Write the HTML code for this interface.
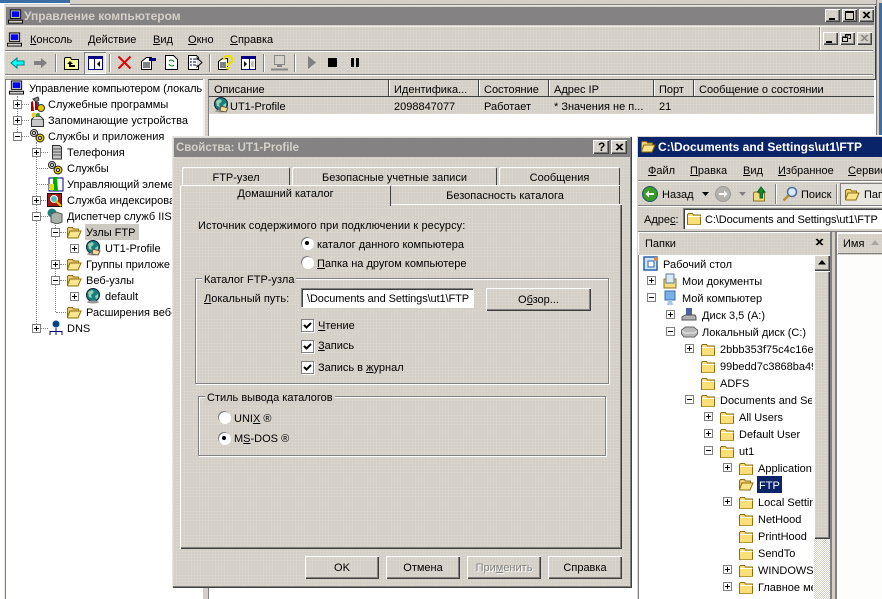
<!DOCTYPE html>
<html><head><meta charset="utf-8">
<style>
html,body{margin:0;padding:0;background:#fff;overflow:hidden}
#r{position:relative;width:882px;height:599px;overflow:hidden;background:#d4d0c8;font:11px/14px "Liberation Sans",sans-serif;color:#000}
#r div,#r span,#r svg{position:absolute}
#r u{position:static}
#r span{white-space:nowrap;line-height:14px;margin-top:1px}
.d{background:#d4d0c8 radial-gradient(circle,#dedbd4 .6px,transparent .9px) 0 0/3px 3px}
.ra{box-shadow:inset 1px 1px 0 #fff,inset -1px -1px 0 #404040,inset -2px -2px 0 #808080}
.g{border:1px solid #808080;box-shadow:1px 1px 0 #fff,inset 1px 1px 0 #fff;background:transparent}
.s{width:1px;background:#808080;border-right:1px solid #fff}
.h{height:1px;background:#808080;border-bottom:1px solid #fff}
.b{text-align:center;line-height:22px}
.rad{width:12px;height:12px;border-radius:50%;background:#fff;box-shadow:inset 1px 1px 0 #808080,1px 1px 0 #fff}
.rad i{position:absolute;left:4px;top:4px;width:4px;height:4px;border-radius:50%;background:#000}
.chk{width:11px;height:11px;background:#fff;border:1px solid #808080;box-shadow:1px 1px 0 #fff}
.v{border-left:1px dotted #808080;width:0}
.o{border-top:1px dotted #808080;height:0}
.lab{background:#d4d0c8;padding:0 2px}
.n{letter-spacing:-.1px}
</style></head><body>
<svg width="0" height="0" style="position:absolute;left:0;top:0">
<defs>
<symbol id="p" viewBox="0 0 9 9"><rect x=".5" y=".5" width="8" height="8" fill="#fff" stroke="#808080"/><path d="M2 4.5h5M4.5 2v5" stroke="#000"/></symbol>
<symbol id="m" viewBox="0 0 9 9"><rect x=".5" y=".5" width="8" height="8" fill="#fff" stroke="#808080"/><path d="M2 4.5h5" stroke="#000"/></symbol>
<symbol id="f" viewBox="0 0 16 15"><path d="M1.500 13.500V3.500l1-1h4l1 1.500h7v9.500z" fill="#fbe07a" stroke="#8a6d10"/><path d="M2 5.500h12.500" stroke="#fff"/><path d="M2 13h13v1H2z" fill="#b39b3a"/></symbol>
<symbol id="fo" viewBox="0 0 16 15"><path d="M1.500 12.500V3.500l1-1h4l1 1.500h5v2H4z" fill="#f0d070" stroke="#8a6d10"/><path d="M1.500 12.500l2.500-6.500h11l-3 7H2z" fill="#fbe48c" stroke="#8a6d10"/></symbol>
<symbol id="gl" viewBox="0 0 16 16"><circle cx="8" cy="7" r="6.500" fill="#17807e" stroke="#123"/><path d="M3 4l4-2 2 2-3 3 1 3-3-1zM10 8l3-2v4l-2 1z" fill="#9ad0b0"/><ellipse cx="8" cy="14" rx="6" ry="1.500" fill="#999"/></symbol>
<symbol id="gl2" viewBox="0 0 16 16"><use href="#gl" width="16" height="16"/><path d="M8 9l7 2-2 4-6-1z" fill="#f3dd9c" stroke="#654"/></symbol>
<symbol id="pc" viewBox="0 0 16 15"><rect x="2.500" y=".5" width="11" height="9" fill="#d4d0c8" stroke="#000"/><rect x="4" y="2" width="8" height="6" fill="#00f"/><path d="M.5 11.500h15v3H.5z" fill="#d4d0c8" stroke="#000"/></symbol>
<symbol id="tl" viewBox="0 0 16 16"><path d="M2 15V6l2-1 1 10zM6 14V3l2-2 1 13z" fill="#a00"/><path d="M8 14V6h2v8z" fill="#06a"/><path d="M4 3l5-2 1 3-3 2z" fill="#888" stroke="#333"/><circle cx="12" cy="12" r="3.500" fill="#e8c800" stroke="#333"/></symbol>
<symbol id="hd" viewBox="0 0 16 16"><rect x="2.500" y="7.500" width="12" height="7" fill="#c8c8c8" stroke="#333"/><path d="M2.500 7.500l3-3h6l3 3" fill="#e8e8e8" stroke="#333"/><circle cx="5" cy="3" r="2.500" fill="#e8c830"/><circle cx="9" cy="3" r="2" fill="#3a9a3a"/></symbol>
<symbol id="gr" viewBox="0 0 16 16"><circle cx="5" cy="5" r="3.500" fill="#ddd" stroke="#222"/><circle cx="5" cy="5" r="1.500" fill="#fff" stroke="#222"/><circle cx="11" cy="10" r="4" fill="#e8c800" stroke="#222"/><circle cx="11" cy="10" r="1.500" fill="#fff" stroke="#222"/></symbol>
<symbol id="sv" viewBox="0 0 16 16"><path d="M4.500 1.500h7l2 1.500v12h-9z" fill="#c4c4c4" stroke="#333"/><path d="M5 5h8M5 8h8M5 11h8" stroke="#555"/></symbol>
</defs></svg>
<div id="r" class="d">
<!-- background windows -->
<div style="left:0;top:0;width:70px;height:3px;background:#3a6ea5"></div>
<div style="left:70px;top:0;width:812px;height:4px;background:#d4d0c8;border-bottom:1px solid #808080"></div>
<div style="left:0;top:3px;width:70px;height:1px;background:#fff"></div>
<div style="left:876px;top:0;width:6px;height:136px;background:#d4d0c8;border-left:1px solid #808080"></div>
<div style="left:879px;top:3px;width:3px;height:133px;background:#3a6ea5"></div>
<div style="left:0;top:4px;width:4px;height:595px;background:#fff"></div>
<!-- main window -->
<div class="d" style="left:4px;top:5px;width:872px;height:594px;box-shadow:inset 1px 1px 0 #e8e6e0,inset -1px 0 0 #404040"></div>
<div style="left:6px;top:7px;width:868px;height:18px;background:#858284"></div>
<svg style="left:8px;top:9px" width="15" height="15"><use href="#pc" width="15" height="15"/></svg>
<span style="left:24px;top:8px;font-weight:bold;color:#d4d0c8;font-size:12px">Управление компьютером</span>
<div class="d ra b" style="left:825px;top:9px;width:15px;height:13px"></div><div style="left:829px;top:18px;width:6px;height:2px;background:#000"></div>
<div class="d ra" style="left:842px;top:9px;width:15px;height:13px"></div><div style="left:845px;top:11px;width:7px;height:6px;border:1px solid #000;border-top-width:2px"></div>
<div class="d ra" style="left:859px;top:9px;width:15px;height:13px"></div><svg style="left:862px;top:11px" width="9" height="9"><path d="M1 1l6 6M2 1l6 6M7 1L1 7M8 1L2 7" stroke="#000"/></svg>
<!-- menu -->
<div class="h" style="left:6px;top:26px;width:866px;background:#f0eee8;border:0"></div>
<svg style="left:7px;top:32px" width="15" height="15"><use href="#pc" width="15" height="15"/></svg>
<span style="left:30px;top:32px"><u>К</u>онсоль</span>
<span style="left:88px;top:32px"><u>Д</u>ействие</span>
<span style="left:153px;top:32px"><u>В</u>ид</span>
<span style="left:188px;top:32px"><u>О</u>кно</span>
<span style="left:230px;top:32px"><u>С</u>правка</span>
<div class="s" style="left:819px;top:27px;height:23px"></div>
<div class="d ra" style="left:823px;top:32px;width:15px;height:13px"></div><div style="left:826px;top:41px;width:6px;height:2px;background:#000"></div>
<div class="d ra" style="left:840px;top:32px;width:15px;height:13px"></div><svg style="left:842px;top:34px" width="10" height="9"><path d="M3.500 2.500V.5h5v4h-2M.5 3.500h5v4h-5z" fill="none" stroke="#000"/><path d="M3 1h6M0 3h6" stroke="#000"/></svg>
<div class="d ra" style="left:857px;top:32px;width:15px;height:13px"></div><svg style="left:860px;top:34px" width="9" height="9"><path d="M1 1l6 6M2 1l6 6M7 1L1 7M8 1L2 7" stroke="#8a8a8a"/></svg>
<div class="h" style="left:5px;top:50px;width:868px"></div>
<!-- toolbar -->
<svg style="left:10px;top:56px" width="15" height="14"><path d="M1 7l6-5v3h7v4H7v3z" fill="#00ffff" stroke="#008080"/></svg>
<svg style="left:33px;top:56px" width="15" height="14"><path d="M14 7L8 2v3H1v4h7v3z" fill="#808080"/></svg>
<div class="s" style="left:55px;top:54px;height:18px"></div>
<svg style="left:64px;top:55px" width="16" height="16"><path d="M.5 14.500V3.500l1-1h5l1 2h7v10z" fill="#ffff99" stroke="#000"/><path d="M6 6L3 9h2v3h6v-2H7V9h2z" fill="#000"/></svg>
<div style="left:84px;top:52px;width:22px;height:22px;background:#e8e6e0;box-shadow:inset 1px 1px 0 #808080,inset -1px -1px 0 #fff"></div>
<svg style="left:88px;top:56px" width="15" height="14"><rect x=".5" y=".5" width="14" height="13" fill="#fff" stroke="#000080"/><rect x="1" y="1" width="13" height="2" fill="#000080"/><rect x="6" y="1" width="1" height="12" fill="#000080"/><path d="M12 5v6L9 8z" fill="#000"/></svg>
<div class="s" style="left:109px;top:54px;height:18px"></div>
<svg style="left:117px;top:55px" width="15" height="15"><path d="M1.500 1.500l12 12M13.500 1.500l-12 12" stroke="#e00000" stroke-width="2"/></svg>
<svg style="left:140px;top:55px" width="17" height="15"><path d="M1.500 6.500l5-4h5v12h-10z" fill="#fff" stroke="#000"/><path d="M3 8h7M3 10h7M3 12h7" stroke="#000"/><path d="M9 3h7v3H9z" fill="#000080"/></svg>
<svg style="left:165px;top:55px" width="13" height="15"><path d="M.5.5h8l4 4v10H.5z" fill="#fff" stroke="#000"/><path d="M4 6a3 3 0 0 1 5 1M9 10a3 3 0 0 1-5-1" fill="none" stroke="#080"/></svg>
<svg style="left:188px;top:55px" width="15" height="15"><path d="M.5.5h8l2 2v12H.5z" fill="#fff" stroke="#000"/><path d="M2 4h2M5 4h3M2 7h2M5 7h3M2 10h2M5 10h3" stroke="#000080"/><path d="M9 5v-2l5 4.500-5 4.500v-2" fill="#ddd" stroke="#000"/></svg>
<div class="s" style="left:209px;top:54px;height:18px"></div>
<svg style="left:218px;top:55px" width="15" height="15"><path d="M.5 6.500l4-3h5v11h-9z" fill="#fff" stroke="#000"/><path d="M2 8h6M2 10h6M2 12h6" stroke="#000"/><path d="M6 5a4 4 0 1 1 6 3l-2 1v2" fill="none" stroke="#e8e000" stroke-width="2.500"/><rect x="8.500" y="12" width="3" height="2.500" fill="#e8e000"/></svg>
<svg style="left:241px;top:56px" width="15" height="14"><rect x=".5" y=".5" width="14" height="13" fill="#fff" stroke="#000080"/><rect x="1" y="1" width="13" height="2" fill="#000080"/><rect x="8" y="1" width="1" height="12" fill="#000080"/><path d="M3 5v6l3-3z" fill="#000"/><path d="M10 6h3M10 8h3M10 10h3" stroke="#808080"/></svg>
<div class="s" style="left:263px;top:54px;height:18px"></div>
<svg style="left:271px;top:55px" width="17" height="16" opacity=".9"><rect x="3.500" y=".5" width="10" height="9" fill="none" stroke="#808080"/><rect x="6" y="10" width="5" height="2" fill="#808080"/><path d="M0 14.500h17" stroke="#808080" stroke-width="2"/></svg>
<div class="s" style="left:294px;top:54px;height:18px"></div>
<svg style="left:308px;top:56px" width="9" height="13"><path d="M0 0l8 6.500L0 13z" fill="#808080"/></svg>
<div style="left:328px;top:58px;width:9px;height:9px;background:#000"></div>
<div style="left:351px;top:58px;width:3px;height:9px;background:#000"></div><div style="left:356px;top:58px;width:3px;height:9px;background:#000"></div>
<div class="h" style="left:5px;top:74px;width:868px;background:#808080"></div>
<!-- left tree -->
<div style="left:5px;top:79px;width:198px;height:520px;background:#fff;border-top:1px solid #808080;border-left:1px solid #808080"></div>
<div style="left:203px;top:79px;width:2px;height:520px;background:#f0eee8"></div>
<div style="left:208px;top:79px;width:667px;height:520px;background:#fff;border-top:1px solid #404040;border-left:1px solid #808080"></div>
<div class="d" style="left:209px;top:80px;width:665px;height:17px"></div>
<div class="d" style="left:209px;top:97px;width:665px;height:17px"></div>
<div style="left:209px;top:96px;width:665px;height:1px;background:#404040"></div>
<div style="left:388px;top:80px;width:1px;height:16px;background:#404040"></div>
<div style="left:478px;top:80px;width:1px;height:16px;background:#404040"></div>
<div style="left:548px;top:80px;width:1px;height:16px;background:#404040"></div>
<div style="left:653px;top:80px;width:1px;height:16px;background:#404040"></div>
<div style="left:693px;top:80px;width:1px;height:16px;background:#404040"></div>
<div style="left:389px;top:80px;width:1px;height:16px;background:#fff"></div>
<div style="left:479px;top:80px;width:1px;height:16px;background:#fff"></div>
<div style="left:549px;top:80px;width:1px;height:16px;background:#fff"></div>
<div style="left:654px;top:80px;width:1px;height:16px;background:#fff"></div>
<div style="left:694px;top:80px;width:1px;height:16px;background:#fff"></div>
<span style="left:214px;top:82px">Описание</span>
<span style="left:394px;top:82px">Идентифика...</span>
<span style="left:484px;top:82px">Состояние</span>
<span style="left:554px;top:82px">Адрес IP</span>
<span style="left:659px;top:82px">Порт</span>
<span style="left:699px;top:82px">Сообщение о состоянии</span>
<svg style="left:213px;top:97px" width="16" height="16"><use href="#gl2" width="16" height="16"/></svg>
<span style="left:230px;top:99px">UT1-Profile</span>
<span style="left:394px;top:99px">2098847077</span>
<span style="left:484px;top:99px">Работает</span>
<span style="left:554px;top:99px">* Значения не п...</span>
<span style="left:659px;top:99px">21</span>
<!-- left tree content -->
<div class="v" style="left:17px;top:96px;height:40px"></div>
<div class="v" style="left:36px;top:142px;height:186px"></div>
<div class="v" style="left:55px;top:222px;height:90px"></div>
<div class="o" style="left:22px;top:104px;width:7px"></div>
<div class="o" style="left:22px;top:120px;width:7px"></div>
<div class="o" style="left:22px;top:136px;width:7px"></div>
<div class="o" style="left:41px;top:152px;width:7px"></div>
<div class="o" style="left:37px;top:168px;width:11px"></div>
<div class="o" style="left:37px;top:184px;width:11px"></div>
<div class="o" style="left:41px;top:200px;width:7px"></div>
<div class="o" style="left:41px;top:216px;width:7px"></div>
<div class="o" style="left:41px;top:328px;width:7px"></div>
<div class="o" style="left:60px;top:232px;width:6px"></div>
<div class="o" style="left:60px;top:264px;width:6px"></div>
<div class="o" style="left:60px;top:280px;width:6px"></div>
<div class="o" style="left:56px;top:312px;width:10px"></div>
<svg style="left:9px;top:80px" width="15" height="15"><use href="#pc" width="15" height="15"/></svg>
<span class="n" style="left:29px;top:81px">Управление компьютером (локаль</span>
<svg style="left:13px;top:100px" width="9" height="9"><use href="#p"/></svg><svg style="left:29px;top:96px" width="16" height="16"><use href="#tl" width="16" height="16"/></svg><span style="left:48px;top:97px">Служебные программы</span>
<svg style="left:13px;top:116px" width="9" height="9"><use href="#p"/></svg><svg style="left:29px;top:112px" width="16" height="16"><use href="#hd" width="16" height="16"/></svg><span style="left:48px;top:113px">Запоминающие устройства</span>
<svg style="left:13px;top:132px" width="9" height="9"><use href="#m"/></svg><svg style="left:29px;top:128px" width="16" height="16"><use href="#gr" width="16" height="16"/></svg><span style="left:48px;top:129px">Службы и приложения</span>
<svg style="left:32px;top:148px" width="9" height="9"><use href="#p"/></svg><svg style="left:48px;top:144px" width="16" height="16"><use href="#sv" width="16" height="16"/></svg><span style="left:67px;top:145px">Телефония</span>
<svg style="left:47px;top:160px" width="16" height="16"><use href="#gr" width="16" height="16"/></svg><span style="left:67px;top:161px">Службы</span>
<svg style="left:48px;top:176px" width="16" height="16"><rect x="1" y="2" width="14" height="13" fill="#fff" stroke="#000080"/><path d="M5 1l4 0 1 14-5 0z" fill="#0a0"/><path d="M1 8h5v6H1z" fill="#e8e000"/></svg><span style="left:67px;top:177px">Управляющий элеме</span>
<svg style="left:32px;top:196px" width="9" height="9"><use href="#p"/></svg><svg style="left:47px;top:192px" width="16" height="16"><rect x=".5" y="1.500" width="14" height="13" fill="#a01818" stroke="#111"/><circle cx="7" cy="7" r="3.500" fill="#4fc0c0" stroke="#fff"/><path d="M9 9l5 5" stroke="#e8c800" stroke-width="2"/></svg><span style="left:67px;top:193px">Служба индексирова</span>
<svg style="left:32px;top:212px" width="9" height="9"><use href="#m"/></svg><svg style="left:47px;top:208px" width="16" height="16"><circle cx="5" cy="5" r="4.500" fill="#208080"/><path d="M4 6l5-2 6 2v8l-5 2-6-2z" fill="#aab0aa" stroke="#555"/></svg><span style="left:67px;top:209px">Диспетчер служб IIS</span>
<svg style="left:51px;top:228px" width="9" height="9"><use href="#m"/></svg><svg style="left:66px;top:225px" width="16" height="15"><use href="#fo" width="16" height="15"/></svg><div style="left:85px;top:224px;width:54px;height:16px;background:#ccc9c2"></div><span style="left:86px;top:225px">Узлы FTP</span>
<svg style="left:70px;top:244px" width="9" height="9"><use href="#p"/></svg><svg style="left:85px;top:240px" width="16" height="16"><use href="#gl2" width="16" height="16"/></svg><span style="left:105px;top:241px">UT1-Profile</span>
<svg style="left:51px;top:260px" width="9" height="9"><use href="#p"/></svg><svg style="left:66px;top:257px" width="16" height="15"><use href="#fo" width="16" height="15"/></svg><span style="left:86px;top:257px">Группы приложе</span>
<svg style="left:51px;top:276px" width="9" height="9"><use href="#m"/></svg><svg style="left:66px;top:273px" width="16" height="15"><use href="#fo" width="16" height="15"/></svg><span style="left:86px;top:273px">Веб-узлы</span>
<svg style="left:70px;top:292px" width="9" height="9"><use href="#p"/></svg><svg style="left:85px;top:288px" width="16" height="16"><use href="#gl" width="16" height="16"/></svg><span style="left:105px;top:289px">default</span>
<svg style="left:66px;top:305px" width="16" height="15"><use href="#fo" width="16" height="15"/></svg><span style="left:86px;top:305px">Расширения веб-</span>
<svg style="left:32px;top:324px" width="9" height="9"><use href="#p"/></svg><svg style="left:48px;top:320px" width="16" height="16"><circle cx="8" cy="4" r="3.500" fill="#048"/><path d="M8 8v3M2 11.500h12M2 11v4M14 11v4M8 11v4" stroke="#000080"/></svg><span style="left:67px;top:321px">DNS</span>
<!-- dialog -->
<div class="d" style="left:172px;top:136px;width:460px;height:452px;box-shadow:inset 1px 1px 0 #e8e6e0,inset -1px -1px 0 #404040,inset -2px -2px 0 #808080"></div>
<div style="left:174px;top:138px;width:456px;height:19px;background:#858284"></div>
<span style="left:176px;top:140px;font-weight:bold;color:#d4d0c8;font-size:11.500px">Свойства: UT1-Profile</span>
<div class="d ra" style="left:593px;top:140px;width:16px;height:14px"></div><span style="left:598px;top:139px;font-weight:bold;font-size:12px">?</span>
<div class="d ra" style="left:611px;top:140px;width:16px;height:14px"></div><svg style="left:615px;top:143px" width="9" height="9"><path d="M1 1l6 6M2 1l6 6M7 1L1 7M8 1L2 7" stroke="#000"/></svg>
<!-- tabs -->
<div class="d" style="left:182px;top:167px;width:108px;height:20px;border-radius:2px 2px 0 0;box-shadow:inset 1px 1px 0 #fff,inset -1px 0 0 #404040"></div>
<div class="d" style="left:292px;top:167px;width:205px;height:20px;border-radius:2px 2px 0 0;box-shadow:inset 1px 1px 0 #fff,inset -1px 0 0 #404040"></div>
<div class="d" style="left:499px;top:167px;width:121px;height:20px;border-radius:2px 2px 0 0;box-shadow:inset 1px 1px 0 #fff,inset -1px 0 0 #404040"></div>
<span style="left:182px;top:170px;width:108px;text-align:center">FTP-узел</span>
<span style="left:292px;top:170px;width:205px;text-align:center">Безопасные учетные записи</span>
<span style="left:499px;top:170px;width:121px;text-align:center">Сообщения</span>
<div class="d" style="left:392px;top:185px;width:228px;height:20px;box-shadow:inset 0 1px 0 #fff,inset -1px 0 0 #404040"></div>
<span style="left:392px;top:188px;width:226px;text-align:center">Безопасность каталога</span>
<!-- page -->
<div class="d" style="left:180px;top:204px;width:442px;height:345px;box-shadow:inset 1px 1px 0 #fff,inset -1px -1px 0 #404040,inset -2px -2px 0 #808080"></div>
<div class="d" style="left:180px;top:185px;width:211px;height:21px;border-radius:2px 2px 0 0;box-shadow:inset 1px 1px 0 #fff,inset -1px 0 0 #404040"></div>
<span style="left:180px;top:186px;width:211px;text-align:center">Домашний каталог</span>
<span style="left:198px;top:218px;letter-spacing:.08px">Источник содержимого при подключении к ресурсу:</span>
<div class="rad" style="left:301px;top:237px"><i></i></div><span style="left:317px;top:237px">каталог <u>д</u>анного компьютера</span>
<div class="rad" style="left:301px;top:256px"></div><span style="left:317px;top:256px"><u>П</u>апка на другом компьютере</span>
<!-- group1 -->
<div class="g" style="left:195px;top:278px;width:412px;height:104px"></div>
<span class="lab" style="left:202px;top:272px">Каталог FTP-узла</span>
<span style="left:204px;top:291px"><u>Л</u>окальный путь:</span>
<div style="left:301px;top:288px;width:172px;height:19px;background:#fff;box-shadow:inset 1px 1px 0 #808080,inset 2px 2px 0 #404040,1px 1px 0 #fff"></div>
<span class="n" style="left:307px;top:291px">\Documents and Settings\ut1\FTP</span>
<div class="d ra" style="left:486px;top:288px;width:105px;height:23px"></div><span style="left:486px;top:292px;width:105px;text-align:center">О<u>б</u>зор...</span>
<div class="chk" style="left:301px;top:319px"></div><svg style="left:303px;top:321px" width="9" height="9"><path d="M1 4l2.500 2.500L8 2" fill="none" stroke="#000" stroke-width="2"/></svg><span style="left:318px;top:318px"><u>Ч</u>тение</span>
<div class="chk" style="left:301px;top:340px"></div><svg style="left:303px;top:342px" width="9" height="9"><path d="M1 4l2.500 2.500L8 2" fill="none" stroke="#000" stroke-width="2"/></svg><span style="left:318px;top:338px"><u>З</u>апись</span>
<div class="chk" style="left:301px;top:361px"></div><svg style="left:303px;top:363px" width="9" height="9"><path d="M1 4l2.500 2.500L8 2" fill="none" stroke="#000" stroke-width="2"/></svg><span style="left:318px;top:360px">Запись в <u>ж</u>урнал</span>
<!-- group2 -->
<div class="g" style="left:198px;top:396px;width:406px;height:58px"></div>
<span class="lab" style="left:205px;top:390px">Стиль вывода каталогов</span>
<div class="rad" style="left:218px;top:411px"></div><span style="left:234px;top:411px">UNI<u>X</u> ®</span>
<div class="rad" style="left:218px;top:432px"><i></i></div><span style="left:234px;top:431px">M<u>S</u>-DOS ®</span>
<!-- buttons -->
<div class="d ra" style="left:305px;top:556px;width:74px;height:23px"></div><span style="left:305px;top:560px;width:74px;text-align:center">OK</span>
<div class="d ra" style="left:386px;top:556px;width:74px;height:23px"></div><span style="left:386px;top:560px;width:74px;text-align:center">Отмена</span>
<div class="d ra" style="left:467px;top:556px;width:74px;height:23px"></div><span style="left:467px;top:560px;width:74px;text-align:center;color:#808080;text-shadow:1px 1px 0 #fff">При<u>м</u>енить</span>
<div class="d ra" style="left:548px;top:556px;width:74px;height:23px"></div><span style="left:548px;top:560px;width:74px;text-align:center">Справка</span>
<!-- white below dialog -->
<div style="left:172px;top:588px;width:464px;height:11px;background:#fff"></div>
<div style="left:203px;top:588px;width:2px;height:11px;background:#d4d0c8"></div>
<div style="left:205px;top:588px;width:3px;height:11px;background:#d4d0c8;border-right:1px solid #808080"></div>
<div style="left:632px;top:114px;width:4px;height:485px;background:#fff"></div>
<!-- explorer -->
<div class="d" style="left:636px;top:135px;width:246px;height:464px;box-shadow:inset 1px 1px 0 #fff"></div>
<div style="left:638px;top:137px;width:244px;height:20px;background:#0a246a"></div>
<svg style="left:640px;top:139px" width="16" height="15"><use href="#fo" width="16" height="15"/></svg>
<span style="left:658px;top:139px;font-weight:bold;color:#fff;font-size:12px">C:\Documents and Settings\ut1\FTP</span>
<span style="left:648px;top:163px"><u>Ф</u>айл</span>
<span style="left:690px;top:163px"><u>П</u>равка</span>
<span style="left:743px;top:163px"><u>В</u>ид</span>
<span style="left:778px;top:163px"><u>И</u>збранное</span>
<span style="left:848px;top:163px"><u>С</u>ервис</span>
<div class="h" style="left:638px;top:180px;width:244px"></div>
<svg style="left:642px;top:186px" width="16" height="16"><circle cx="8" cy="8" r="7.500" fill="#3a9a2a" stroke="#256"/><path d="M12 7v2H7v2.500L3.500 8 7 4.500V7z" fill="#fff"/></svg>
<span style="left:662px;top:187px">Назад</span>
<svg style="left:702px;top:192px" width="7" height="4"><path d="M0 0h7L3.500 4z"/></svg>
<svg style="left:715px;top:186px" width="16" height="16"><circle cx="8" cy="8" r="7.500" fill="#b4b2ac" stroke="#999"/><path d="M4 7v2h5v2.500L12.500 8 9 4.500V7z" fill="#fff"/></svg>
<svg style="left:739px;top:192px" width="7" height="4"><path d="M0 0h7L3.500 4z" fill="#808080"/></svg>
<svg style="left:753px;top:186px" width="15" height="16"><path d="M.5 15V7l1-1h3l1 1h6v8z" fill="#f5dc80" stroke="#8a7324"/><path d="M8 1l4 5h-2.500v6H7V6H4.500z" fill="#1a8a1a" stroke="#063"/></svg>
<div class="s" style="left:775px;top:184px;height:20px"></div>
<svg style="left:782px;top:186px" width="16" height="16"><circle cx="10" cy="6" r="4.500" fill="#d8ecff" stroke="#4a6a9a" stroke-width="1.500"/><path d="M6.500 9.500L1.500 14.500" stroke="#b8902a" stroke-width="2.500"/></svg>
<span style="left:801px;top:187px">Поиск</span>
<div class="s" style="left:836px;top:184px;height:20px"></div>
<div style="left:840px;top:183px;width:42px;height:22px;background:#e8e6e0;box-shadow:inset 1px 1px 0 #808080"></div>
<svg style="left:844px;top:187px" width="16" height="15"><use href="#fo" width="16" height="15"/></svg>
<span style="left:864px;top:187px">Папки</span>
<div class="h" style="left:638px;top:205px;width:244px"></div>
<span style="left:644px;top:212px">Адре<u>с</u>:</span>
<div style="left:683px;top:208px;width:199px;height:21px;background:#fff;box-shadow:inset 1px 1px 0 #808080,inset 2px 2px 0 #404040"></div>
<svg style="left:686px;top:211px" width="16" height="15"><use href="#f" width="16" height="15"/></svg>
<span class="n" style="left:705px;top:212px">C:\Documents and Settings\ut1\FTP</span>
<div class="h" style="left:638px;top:231px;width:244px;background:#808080"></div>
<!-- folders pane -->
<div class="d" style="left:638px;top:232px;width:193px;height:23px;box-shadow:inset 1px 1px 0 #fff"></div>
<span style="left:645px;top:236px">Папки</span>
<svg style="left:815px;top:238px" width="9" height="9"><path d="M1 1l6 6M2 1l6 6M7 1L1 7M8 1L2 7" stroke="#000"/></svg>
<div style="left:638px;top:255px;width:176px;height:344px;background:#fff;border-left:1px solid #808080;box-sizing:border-box"></div>
<div class="d ra" style="left:814px;top:255px;width:16px;height:16px"></div><svg style="left:818px;top:260px" width="8" height="5"><path d="M4 0l4 4.500H0z"/></svg>
<div class="d ra" style="left:814px;top:271px;width:16px;height:268px"></div>
<div style="left:814px;top:539px;width:16px;height:60px;background:repeating-conic-gradient(#fff 0 25%,#d4d0c8 0 50%) 0 0/2px 2px"></div>
<div style="left:830px;top:232px;width:2px;height:367px;background:#808080"></div>
<div style="left:832px;top:232px;width:3px;height:367px;background:#d4d0c8"></div>
<div style="left:835px;top:232px;width:2px;height:367px;background:#808080"></div>
<div class="d" style="left:837px;top:233px;width:45px;height:21px;box-shadow:inset 1px 1px 0 #fff,inset 0 -1px 0 #808080"></div>
<span style="left:843px;top:236px">Имя</span>
<svg style="left:871px;top:240px" width="8" height="5"><path d="M4 0l4 5H0z" fill="#a8a69e"/></svg>
<div style="left:837px;top:255px;width:45px;height:344px;background:#fdfdfb"></div>
<!-- explorer tree -->
<svg style="left:643px;top:256px" width="16" height="16"><rect x="1" y="1" width="13" height="13" fill="#cfe6f8" stroke="#2a62b0" stroke-width="1.500"/><path d="M5 5h6v6H5z" fill="#fff" stroke="#2a62b0"/><circle cx="13" cy="3" r="2" fill="#d84"/></svg><span style="left:663px;top:257px">Рабочий стол</span>
<svg style="left:647px;top:276px" width="9" height="9"><use href="#p"/></svg><svg style="left:662px;top:273px" width="16" height="16"><path d="M2 6h12v9H2z" fill="#f5dc80" stroke="#8a7324"/><path d="M4 1h8v9H4z" fill="#dce8f5" stroke="#5a7aa8"/></svg><span style="left:682px;top:274px">Мои документы</span>
<svg style="left:647px;top:293px" width="9" height="9"><use href="#m"/></svg><svg style="left:664px;top:290px" width="13" height="16"><path d="M1 1h10v9H1z" fill="#7ab0e8" stroke="#3a6aa8"/><path d="M4 10h4l1 5H3z" fill="#a8c8e8"/></svg><span style="left:682px;top:291px">Мой компьютер</span>
<svg style="left:666px;top:310px" width="9" height="9"><use href="#p"/></svg><svg style="left:681px;top:307px" width="16" height="16"><path d="M5 1h6v8H5z" fill="#5060a0"/><path d="M1 10l3-2h10l1 2v3H1z" fill="#b0b0b0" stroke="#555"/></svg><span style="left:702px;top:308px">Диск 3,5 (A:)</span>
<svg style="left:666px;top:327px" width="9" height="9"><use href="#m"/></svg><svg style="left:681px;top:326px" width="17" height="12"><path d="M.5 4l4-3h8l4 3v4l-3 3H3l-2.500-3z" fill="#b8b8b8" stroke="#666"/><path d="M1 5l3 2h9l3-2" fill="none" stroke="#eee"/></svg><span style="left:702px;top:325px">Локальный диск (C:)</span>
<svg style="left:685px;top:344px" width="9" height="9"><use href="#p"/></svg><svg style="left:700px;top:342px" width="16" height="15"><use href="#f" width="16" height="15"/></svg><span style="left:720px;top:342px;width:93px;overflow:hidden">2bbb353f75c4c16e3</span>
<svg style="left:700px;top:359px" width="16" height="15"><use href="#f" width="16" height="15"/></svg><span style="left:720px;top:359px;width:93px;overflow:hidden">99bedd7c3868ba49</span>
<svg style="left:700px;top:376px" width="16" height="15"><use href="#f" width="16" height="15"/></svg><span style="left:720px;top:376px">ADFS</span>
<svg style="left:685px;top:395px" width="9" height="9"><use href="#m"/></svg><svg style="left:700px;top:393px" width="16" height="15"><use href="#f" width="16" height="15"/></svg><span style="left:720px;top:393px;width:92px;overflow:hidden">Documents and Settings</span>
<svg style="left:704px;top:412px" width="9" height="9"><use href="#p"/></svg><svg style="left:719px;top:410px" width="16" height="15"><use href="#f" width="16" height="15"/></svg><span style="left:739px;top:410px">All Users</span>
<svg style="left:704px;top:429px" width="9" height="9"><use href="#p"/></svg><svg style="left:719px;top:427px" width="16" height="15"><use href="#f" width="16" height="15"/></svg><span style="left:739px;top:427px">Default User</span>
<svg style="left:704px;top:446px" width="9" height="9"><use href="#m"/></svg><svg style="left:719px;top:444px" width="16" height="15"><use href="#f" width="16" height="15"/></svg><span style="left:739px;top:444px">ut1</span>
<svg style="left:723px;top:463px" width="9" height="9"><use href="#p"/></svg><svg style="left:738px;top:461px" width="16" height="15"><use href="#f" width="16" height="15"/></svg><span style="left:758px;top:461px;width:55px;overflow:hidden">Application Data</span>
<svg style="left:738px;top:477px" width="16" height="15"><use href="#fo" width="16" height="15"/></svg><div style="left:757px;top:476px;width:25px;height:17px;background:#0a246a"></div><span style="left:759px;top:478px;color:#fff">FTP</span>
<svg style="left:723px;top:497px" width="9" height="9"><use href="#p"/></svg><svg style="left:738px;top:495px" width="16" height="15"><use href="#f" width="16" height="15"/></svg><span style="left:758px;top:495px;width:55px;overflow:hidden">Local Settings</span>
<svg style="left:738px;top:512px" width="16" height="15"><use href="#f" width="16" height="15"/></svg><span style="left:758px;top:512px">NetHood</span>
<svg style="left:738px;top:529px" width="16" height="15"><use href="#f" width="16" height="15"/></svg><span style="left:758px;top:529px">PrintHood</span>
<svg style="left:738px;top:546px" width="16" height="15"><use href="#f" width="16" height="15"/></svg><span style="left:758px;top:546px">SendTo</span>
<svg style="left:723px;top:565px" width="9" height="9"><use href="#p"/></svg><svg style="left:738px;top:563px" width="16" height="15"><use href="#f" width="16" height="15"/></svg><span style="left:758px;top:563px">WINDOWS</span>
<svg style="left:723px;top:582px" width="9" height="9"><use href="#p"/></svg><svg style="left:738px;top:580px" width="16" height="15"><use href="#f" width="16" height="15"/></svg><span style="left:758px;top:580px;width:55px;overflow:hidden">Главное меню</span>
<svg style="left:738px;top:597px" width="16" height="15"><use href="#f" width="16" height="15"/></svg>
</div>
</body></html>
